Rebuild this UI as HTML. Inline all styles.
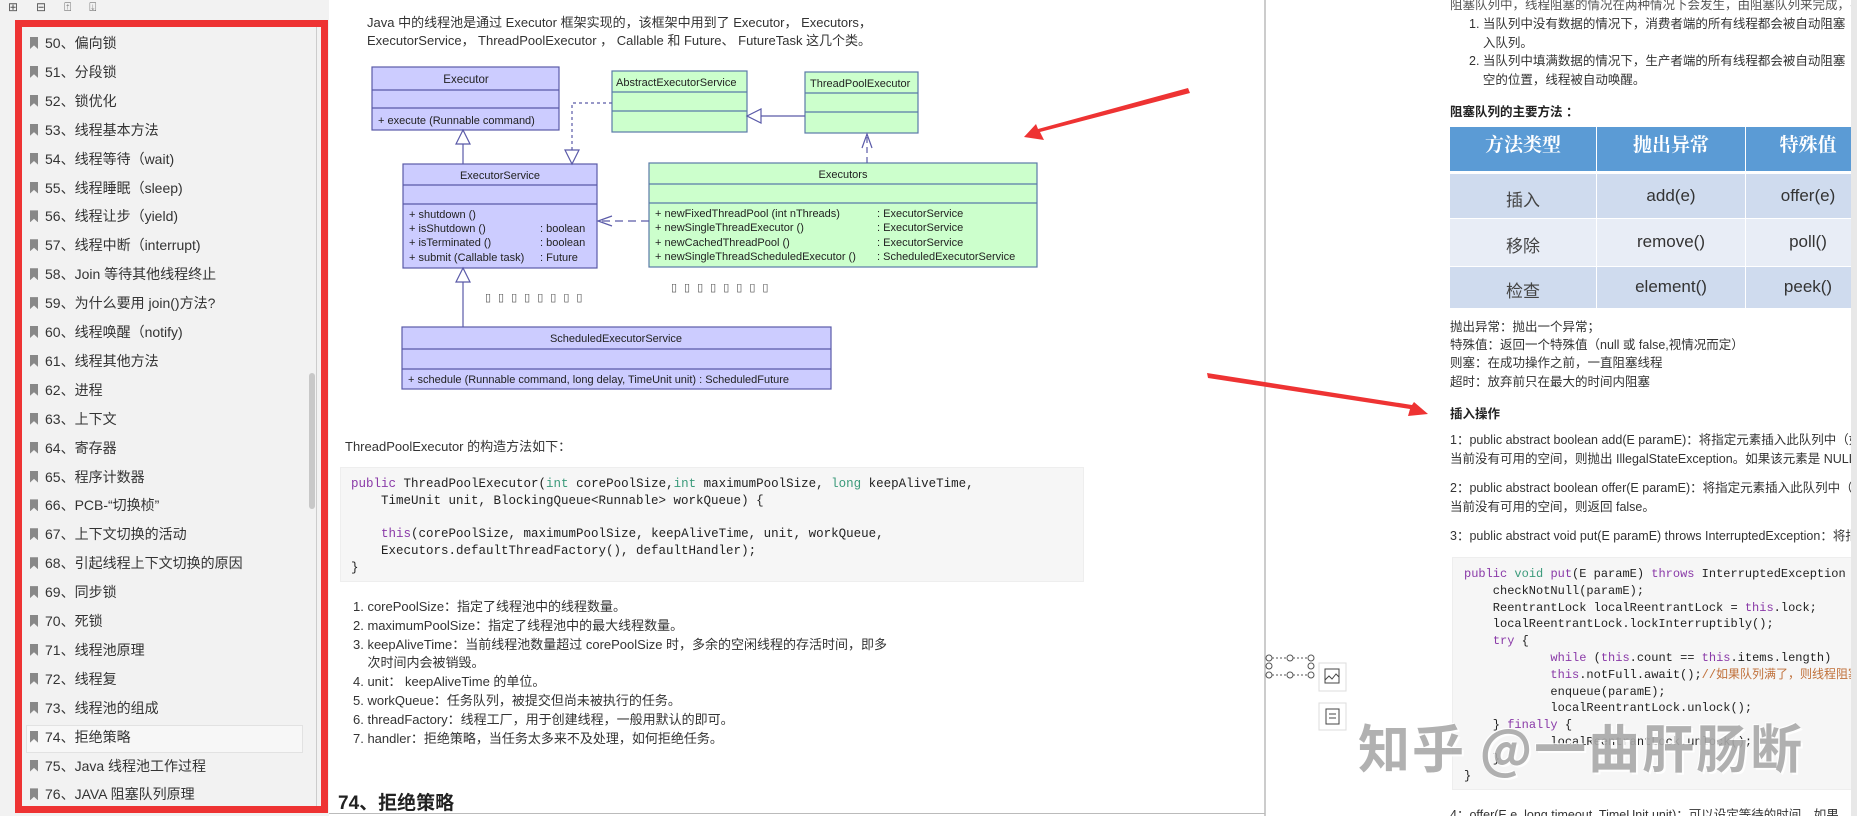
<!DOCTYPE html>
<html><head><meta charset="utf-8">
<style>
*{margin:0;padding:0;box-sizing:border-box}
body{width:1857px;height:816px;overflow:hidden;background:#fff;position:relative;font-family:"Liberation Sans","Noto Sans CJK SC",sans-serif;color:#333}
.abs{position:absolute;white-space:nowrap}
#side{position:absolute;left:0;top:0;width:329px;height:816px;background:#f2f2f2}
#red{position:absolute;left:15px;top:20px;width:313px;height:793px;border:7px solid #ee3333}
.it{position:absolute;left:30px;font-size:14px;color:#333;height:20px;line-height:20px}
.it i{display:inline-block;width:8px;height:12px;background:#888;margin-right:7px;vertical-align:-1px;clip-path:polygon(0 0,100% 0,100% 100%,50% 70%,0 100%)}
.t{font-size:13px;color:#333}
.code{font-family:"Liberation Mono","DejaVu Sans Mono",monospace;font-size:12.5px;color:#222}
.kw{color:#8a3aa8}.gr{color:#3a9a7a}.cm{color:#c0703a}
</style></head><body>
<div id="side">
 <div class="abs" style="left:8px;top:0;font-size:12px;color:#555;letter-spacing:18px">⊞⊟⍐⍗</div>
 <div id="red"></div>
 <div style="position:absolute;left:316px;top:27px;width:1px;height:779px;background:#ccc"></div>
 <div style="position:absolute;left:309px;top:373px;width:6px;height:136px;background:#c8c8c8;border-radius:3px"></div>
 <div style="position:absolute;left:26px;top:725px;width:277px;height:28px;background:#f7f7f7;border:1px solid #e2e2e2"></div>
</div>
<div id="items"></div>
<script>
var n=["50、偏向锁","51、分段锁","52、锁优化","53、线程基本方法","54、线程等待（wait)","55、线程睡眠（sleep)","56、线程让步（yield)","57、线程中断（interrupt)","58、Join 等待其他线程终止","59、为什么要用 join()方法?","60、线程唤醒（notify)","61、线程其他方法","62、进程","63、上下文","64、寄存器","65、程序计数器","66、PCB-“切换桢”","67、上下文切换的活动","68、引起线程上下文切换的原因","69、同步锁","70、死锁","71、线程池原理","72、线程复","73、线程池的组成","74、拒绝策略","75、Java 线程池工作过程","76、JAVA 阻塞队列原理"];
var h="";for(var i=0;i<n.length;i++){h+='<div class="it" style="top:'+(33+i*28.9)+'px"><i></i>'+n[i]+'</div>';}
document.getElementById('items').innerHTML=h;
</script>

<div class="abs t" style="left:367px;top:12px">Java 中的线程池是通过 Executor 框架实现的，该框架中用到了 Executor， Executors，</div>
<div class="abs t" style="left:367px;top:30px">ExecutorService， ThreadPoolExecutor ， Callable 和 Future、 FutureTask 这几个类。</div>

<svg class="abs" style="left:0;top:0" width="1857" height="816" font-family="Liberation Sans, sans-serif" font-size="11" fill="#222">
 <g stroke="#5a5aa8" stroke-width="1.2" fill="#ccccff">
  <rect x="372" y="67" width="187" height="63"/><line x1="372" y1="90" x2="559" y2="90"/><line x1="372" y1="108" x2="559" y2="108"/>
  <rect x="403" y="164" width="194" height="104"/><line x1="403" y1="185" x2="597" y2="185"/><line x1="403" y1="204" x2="597" y2="204"/>
  <rect x="402" y="327" width="429" height="62"/><line x1="402" y1="349" x2="831" y2="349"/><line x1="402" y1="369" x2="831" y2="369"/>
 </g>
 <g stroke="#5a7aa8" stroke-width="1.2" fill="#ccffcc">
  <rect x="612" y="71" width="135" height="61"/><line x1="612" y1="92" x2="747" y2="92"/><line x1="612" y1="111" x2="747" y2="111"/>
  <rect x="805" y="72" width="113" height="61"/><line x1="805" y1="93" x2="918" y2="93"/><line x1="805" y1="112" x2="918" y2="112"/>
  <rect x="649" y="163" width="388" height="104"/><line x1="649" y1="184" x2="1037" y2="184"/><line x1="649" y1="203" x2="1037" y2="203"/>
 </g>
 <g stroke="#5a5aa8" stroke-width="1.2" fill="none">
  <line x1="463" y1="144" x2="463" y2="164"/><polygon points="463,130 456,144 470,144" fill="#fff"/>
  <line x1="463" y1="282" x2="463" y2="327"/><polygon points="463,268 456,282 470,282" fill="#fff"/>
  <path d="M612 103 H572 V150" stroke-dasharray="3,3"/><polygon points="572,164 565,150 579,150" fill="#fff"/>
  <line x1="761" y1="116" x2="805" y2="116"/><polygon points="747,116 761,109 761,123" fill="#fff"/>
  <line x1="867" y1="163" x2="867" y2="134" stroke-dasharray="6,4"/><path d="M862 148 L867 134 L872 148"/>
  <line x1="649" y1="221" x2="598" y2="221" stroke-dasharray="8,5"/><path d="M612 216 L598 221 L612 226"/>
 </g>
 <text x="466" y="83" text-anchor="middle" font-size="11.5">Executor</text>
 <text x="378" y="124">+   execute (Runnable command)</text>
 <text x="500" y="179" text-anchor="middle">ExecutorService</text>
 <text x="409" y="218">+   shutdown ()</text>
 <text x="409" y="232">+   isShutdown ()</text><text x="540" y="232">: boolean</text>
 <text x="409" y="246">+   isTerminated ()</text><text x="540" y="246">: boolean</text>
 <text x="409" y="261">+   submit (Callable task)</text><text x="540" y="261">: Future</text>
 <text x="616" y="86">AbstractExecutorService</text>
 <text x="810" y="87">ThreadPoolExecutor</text>
 <text x="843" y="178" text-anchor="middle">Executors</text>
 <text x="655" y="217">+   newFixedThreadPool (int nThreads)</text><text x="877" y="217">: ExecutorService</text>
 <text x="655" y="231">+   newSingleThreadExecutor ()</text><text x="877" y="231">: ExecutorService</text>
 <text x="655" y="246">+   newCachedThreadPool ()</text><text x="877" y="246">: ExecutorService</text>
 <text x="655" y="260">+   newSingleThreadScheduledExecutor ()</text><text x="877" y="260">: ScheduledExecutorService</text>
 <text x="616" y="342" text-anchor="middle">ScheduledExecutorService</text>
 <text x="408" y="383">+   schedule (Runnable command, long delay, TimeUnit unit)   : ScheduledFuture</text>
 <text x="485" y="301" letter-spacing="7" fill="#555">▯▯▯▯▯▯▯▯</text>
 <text x="671" y="291" letter-spacing="7" fill="#555">▯▯▯▯▯▯▯▯</text>
 <line x1="1265" y1="0" x2="1265" y2="816" stroke="#999" stroke-width="1"/>
 <polygon points="1188,88 1190,93 1040,132 1044,140 1024,137 1036,124 1038,129" fill="#ee3333"/>
 <polygon points="1207,373 1208,378 1410,409 1408,416 1428,414 1414,402 1412,405" fill="#ee3333"/>
 <g stroke="#555" fill="none" stroke-width="1">
  <circle cx="1269" cy="658" r="3"/><circle cx="1290" cy="658" r="3"/><circle cx="1311" cy="658" r="3"/>
  <circle cx="1269" cy="675" r="3"/><circle cx="1290" cy="675" r="3"/><circle cx="1311" cy="675" r="3"/>
  <circle cx="1269" cy="666" r="3"/><circle cx="1311" cy="666" r="3"/>
  <path d="M1272 658h15M1293 658h15M1272 675h15M1293 675h15" stroke-dasharray="2,2"/>
  <rect x="1319" y="663" width="27" height="28" fill="#fff" stroke="#ddd"/>
  <rect x="1325" y="669" width="14" height="14" stroke="#444"/><path d="M1325 680l4-4 3 3 4-5 3 3" stroke="#444"/>
  <rect x="1319" y="703" width="27" height="27" fill="#fff" stroke="#ddd"/>
  <rect x="1326" y="709" width="13" height="15" stroke="#444"/><path d="M1329 714h7M1329 718h7" stroke="#444"/>
 </g>
</svg>

<div class="abs t" style="left:345px;top:436px">ThreadPoolExecutor 的构造方法如下：</div>
<div class="abs" style="left:340px;top:467px;width:744px;height:115px;background:#f6f6f6;border:1px solid #eee"></div>
<div class="abs code" style="left:351px;top:476px;line-height:16.8px;white-space:pre"><span class="kw">public</span> ThreadPoolExecutor(<span class="gr">int</span> corePoolSize,<span class="gr">int</span> maximumPoolSize, <span class="gr">long</span> keepAliveTime,
    TimeUnit unit, BlockingQueue&lt;Runnable&gt; workQueue) {

    <span class="kw">this</span>(corePoolSize, maximumPoolSize, keepAliveTime, unit, workQueue,
    Executors.defaultThreadFactory(), defaultHandler);
}</div>
<div class="abs t" style="left:353px;top:598px;line-height:18.8px">1. corePoolSize：指定了线程池中的线程数量。<br>2. maximumPoolSize：指定了线程池中的最大线程数量。<br>3. keepAliveTime：当前线程池数量超过 corePoolSize 时，多余的空闲线程的存活时间，即多<br>&nbsp;&nbsp;&nbsp;&nbsp;次时间内会被销毁。<br>4. unit： keepAliveTime 的单位。<br>5. workQueue：任务队列，被提交但尚未被执行的任务。<br>6. threadFactory：线程工厂，用于创建线程，一般用默认的即可。<br>7. handler：拒绝策略，当任务太多来不及处理，如何拒绝任务。</div>
<div class="abs" style="left:338px;top:788px;font-size:19px;font-weight:bold;color:#222">74、拒绝策略</div>
<div class="abs" style="left:329px;top:813px;width:936px;height:1px;background:#bbb"></div>

<div class="abs" style="left:1266px;top:0;width:591px;height:816px;overflow:hidden">
 <div class="abs t" style="left:184px;top:-6px;font-size:12.5px;color:#555">阻塞队列中，线程阻塞的情况在两种情况下会发生，由阻塞队列来完成，不需要生产者和消费者</div>
 <div class="abs t" style="left:203px;top:15px;line-height:18.5px;font-size:12.5px">1. 当队列中没有数据的情况下，消费者端的所有线程都会被自动阻塞（挂起），直到有数据放<br>&nbsp;&nbsp;&nbsp;&nbsp;入队列。<br>2. 当队列中填满数据的情况下，生产者端的所有线程都会被自动阻塞（挂起），直到队列中有<br>&nbsp;&nbsp;&nbsp;&nbsp;空的位置，线程被自动唤醒。</div>
 <div class="abs" style="left:184px;top:101px;font-size:12.5px;font-weight:bold;color:#222">阻塞队列的主要方法 ：</div>
 <div class="abs" style="left:184px;top:127px;width:420px">
  <div style="height:44px;background:#5b9bd5;display:flex;color:#fff;font-size:19px;font-family:'Noto Serif CJK SC',serif;font-weight:bold">
   <div style="width:147px;text-align:center;padding-top:3px;border-right:1px solid #fff">方法类型</div><div style="width:149px;text-align:center;padding-top:3px;border-right:1px solid #fff">抛出异常</div><div style="flex:1;text-align:center;padding-top:3px">特殊值</div></div>
  <div style="height:3px;background:#fff"></div>
  <div style="display:flex;height:45px;background:#cfdbee;font-size:17px;border-bottom:1px solid #fff"><div style="width:147px;text-align:center;color:#444;border-right:1px solid #fff;padding-top:12px">插入</div><div style="width:149px;text-align:center;border-right:1px solid #fff;padding-top:12px">add(e)</div><div style="flex:1;text-align:center;padding-top:12px">offer(e)</div></div>
  <div style="display:flex;height:47px;background:#e8edf6;font-size:17px"><div style="width:147px;text-align:center;color:#444;border-right:1px solid #fff;padding-top:13px">移除</div><div style="width:149px;text-align:center;border-right:1px solid #fff;padding-top:13px">remove()</div><div style="flex:1;text-align:center;padding-top:13px">poll()</div></div>
  <div style="display:flex;height:42px;background:#cfdbee;font-size:17px;border-top:1px solid #fff"><div style="width:147px;text-align:center;color:#444;border-right:1px solid #fff;padding-top:10px">检查</div><div style="width:149px;text-align:center;border-right:1px solid #fff;padding-top:10px">element()</div><div style="flex:1;text-align:center;padding-top:10px">peek()</div></div>
 </div>
 <div class="abs t" style="left:184px;top:318px;line-height:18.2px;font-size:12.5px">抛出异常：抛出一个异常；<br>特殊值：返回一个特殊值（null 或 false,视情况而定）<br>则塞：在成功操作之前，一直阻塞线程<br>超时：放弃前只在最大的时间内阻塞</div>
 <div class="abs" style="left:184px;top:403px;font-size:12.5px;font-weight:bold;color:#222">插入操作</div>
 <div class="abs t" style="left:184px;top:431px;line-height:18.5px;font-size:12.5px">1：public abstract boolean add(E paramE)：将指定元素插入此队列中（如果立即可行且不会违反容量限制），<br>当前没有可用的空间，则抛出 IllegalStateException。如果该元素是 NULL</div>
 <div class="abs t" style="left:184px;top:479px;line-height:18.5px;font-size:12.5px">2：public abstract boolean offer(E paramE)：将指定元素插入此队列中（如果立即可行且不会违反容量限制），<br>当前没有可用的空间，则返回 false。</div>
 <div class="abs t" style="left:184px;top:525px;font-size:12.5px">3：public abstract void put(E paramE) throws InterruptedException：将指定元素插入此队列中</div>
 <div class="abs" style="left:186px;top:557px;width:420px;height:233px;background:#f6f6f6;border:1px solid #eee"></div>
 <div class="abs code" style="left:198px;top:566px;line-height:16.8px;white-space:pre;font-size:12px"><span class="kw">public</span> <span class="gr">void</span> <span class="kw">put</span>(E paramE) <span class="kw">throws</span> InterruptedException {
    checkNotNull(paramE);
    ReentrantLock localReentrantLock = <span class="kw">this</span>.lock;
    localReentrantLock.lockInterruptibly();
    <span class="kw">try</span> {
            <span class="kw">while</span> (<span class="kw">this</span>.count == <span class="kw">this</span>.items.length)
            <span class="kw">this</span>.notFull.await();<span class="cm">//如果队列满了，则线程阻塞等待</span>
            enqueue(paramE);
            localReentrantLock.unlock();
    } <span class="kw">finally</span> {
            localReentrantLock.unlock();
    }
}</div>
 <div class="abs t" style="left:184px;top:804px;font-size:12.5px">4：offer(E e, long timeout, TimeUnit unit)：可以设定等待的时间，如果</div>
 <div class="abs" style="left:585px;top:0;width:6px;height:816px;background:#e8e8e8"></div>
</div>
<div class="abs" style="left:1358px;top:708px;font-size:52px;color:#a9a9a9;font-weight:bold;letter-spacing:2px;text-shadow:2px 2px 0 #fff,-1px -1px 0 #fff;font-family:'Noto Sans CJK SC',sans-serif;opacity:.9">知乎 @一曲肝肠断</div>
</body></html>
